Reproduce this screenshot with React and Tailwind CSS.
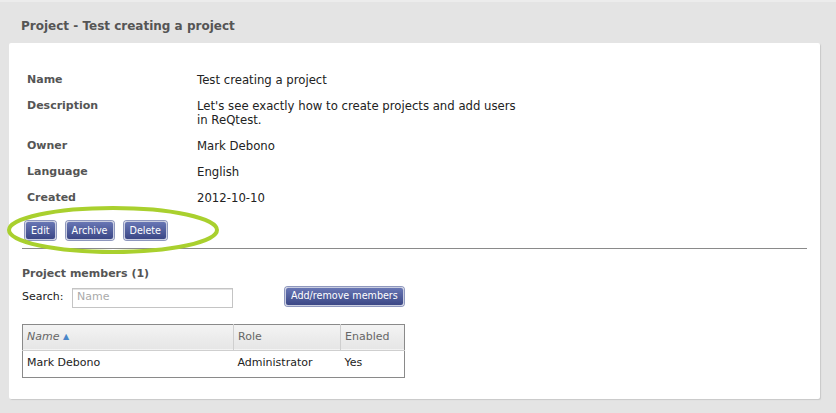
import React from "react";

const Btn = ({ children, className = "" }) => (
  <button
    className={`h-[19px] px-[5px] rounded-[3px] border border-[#c9cde0] text-white text-[9.6px] leading-none bg-gradient-to-b from-[#6876b4] to-[#3b4786] shadow-[0_0_0_1px_#8e97bd] ${className}`}
  >
    {children}
  </button>
);

const rows = [
  ["Name", "Test creating a project"],
  ["Description", "Let's see exactly how to create projects and add users\nin ReQtest."],
  ["Owner", "Mark Debono"],
  ["Language", "English"],
  ["Created", "2012-10-10"],
];

export default function App() {
  return (
    <div
      className="w-[836px] h-[413px] bg-[#e4e4e4] overflow-hidden border-t-2 border-[#ececec]"
      style={{ fontFamily: '"DejaVu Sans", Verdana, sans-serif' }}
    >
      <div className="pl-[21px] pt-[15px] h-[41px] text-[12px] font-bold text-[#555]">
        Project - Test creating a project
      </div>
      <div className="relative ml-[9px] w-[811px] h-[356px] bg-white rounded-[2px] shadow-[1px_1px_1px_#c8c8c8] pt-[30px] px-[13px]">
        <div className="pl-[5px] flex flex-col gap-[12px] text-[11px] leading-[14px]">
          {rows.map(([k, v]) => (
            <div key={k} className="flex">
              <div className="w-[170px] font-bold text-[#555]">{k}</div>
              <div className="text-[#222] text-[11.7px] leading-[14px] whitespace-pre-line">{v}</div>
            </div>
          ))}
        </div>
        <div className="flex gap-[10px] mt-[16px] ml-[3px]">
          <Btn>Edit</Btn>
          <Btn>Archive</Btn>
          <Btn>Delete</Btn>
        </div>
        <div className="mt-[8px] h-[1px] bg-[#8a8a8a] w-[785px]" />
        <div className="mt-[17px] text-[11px] font-bold text-[#555]">Project members (1)</div>
        <div className="flex items-center mt-[5px] text-[11px] text-[#222]">
          <span className="w-[50px]">Search:</span>
          <div className="w-[161px] h-[20px] border border-[#c4c4c4] shadow-[inset_0_1px_0_#e4e4e4] pl-[4px] flex items-center text-[#aaa]">
            Name
          </div>
          <Btn className="ml-[52px] -mt-[3px] px-[5px]">Add/remove members</Btn>
        </div>
        <table className="mt-[16px] w-[383px] border border-[#8a8a8a] text-[11px] border-collapse">
          <thead>
            <tr className="h-[26px] bg-gradient-to-b from-[#f4f4f4] to-[#e6e6e6] text-[#666] border-b border-[#cfcfcf]">
              <th className="w-[211px] text-left font-normal italic pl-[4px] border-r border-[#cfcfcf]">
                Name <span className="text-[#4a86c8] text-[8px] not-italic align-[1px]">▲</span>
              </th>
              <th className="w-[107px] text-left font-normal pl-[4px] border-r border-[#cfcfcf]">Role</th>
              <th className="text-left font-normal pl-[4px]">Enabled</th>
            </tr>
          </thead>
          <tbody>
            <tr className="h-[27px] text-[#222]">
              <td className="pl-[4px]">Mark Debono</td>
              <td className="pl-[4px]">Administrator</td>
              <td className="pl-[4px]">Yes</td>
            </tr>
          </tbody>
        </table>
        <svg
          className="absolute left-[-3px] top-[161px] pointer-events-none"
          width="214"
          height="52"
          viewBox="0 0 214 52"
        >
          <ellipse cx="107" cy="26" rx="104" ry="22" fill="none" stroke="#a9d02e" strokeWidth="4" />
        </svg>
      </div>
    </div>
  );
}
